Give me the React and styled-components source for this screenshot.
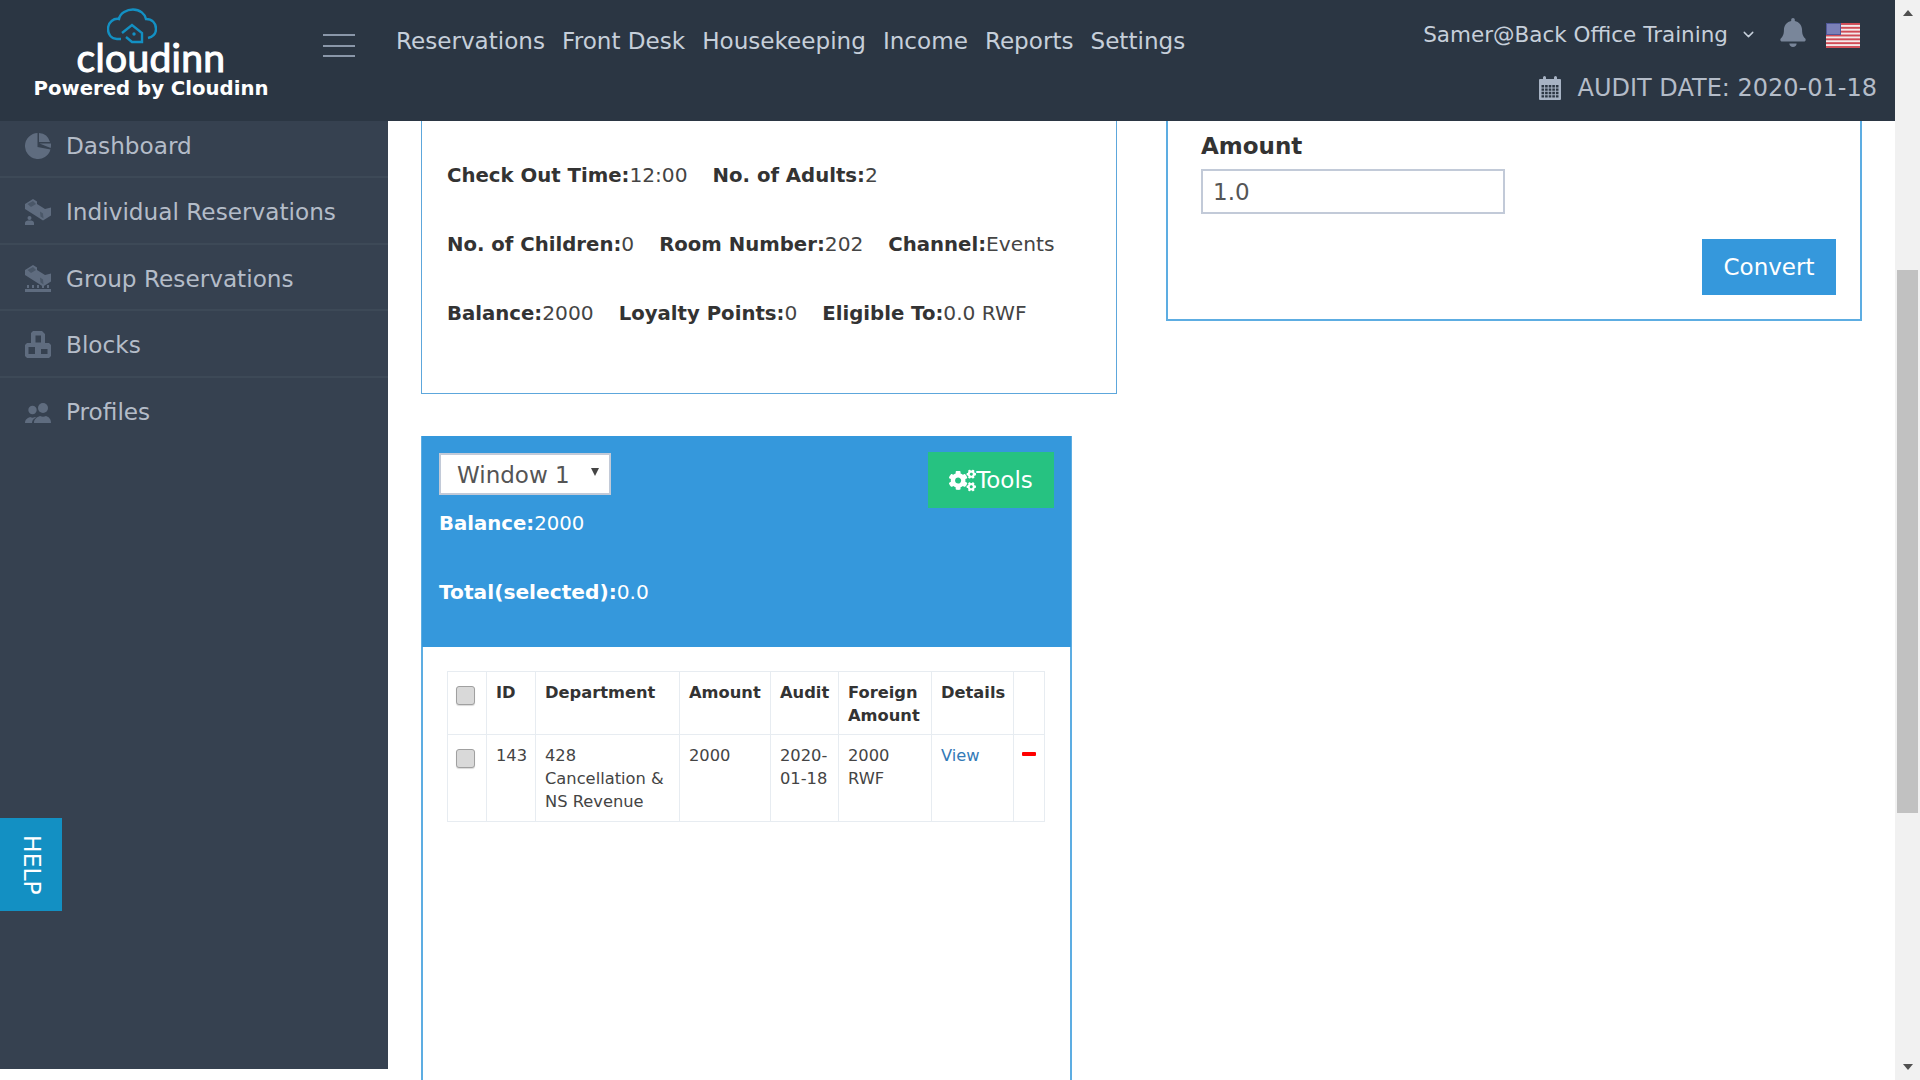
import styled, { createGlobalStyle } from "styled-components";
import { FaBell, FaCogs } from "react-icons/fa";
import { FiChevronDown } from "react-icons/fi";

const GlobalStyle = createGlobalStyle`
  html, body {
    margin: 0;
    height: 100%;
    overflow: hidden;
    background: #fff;
    font-family: "DejaVu Sans", Verdana, sans-serif;
    color: #333;
  }
  * { box-sizing: border-box; }
`;

const Page = styled.div`
  display: flex;
  width: 100%;
  height: 100vh;
`;

const Viewport = styled.div`
  flex: 1;
  min-width: 0;
  display: flex;
  flex-direction: column;
`;

/* scrollbar */
const ScrollTrack = styled.div`
  width: 25px;
  background: #f1f1f1;
  display: flex;
  flex-direction: column;
  align-items: center;
  padding-top: 10px;
`;

const ArrowUp = styled.span`
  width: 0;
  height: 0;
  border-left: 5px solid transparent;
  border-right: 5px solid transparent;
  border-bottom: 6px solid #505050;
`;

const ArrowDown = styled.span`
  width: 0;
  height: 0;
  margin-top: 251px;
  border-left: 5px solid transparent;
  border-right: 5px solid transparent;
  border-top: 6px solid #505050;
`;

const Thumb = styled.div`
  width: 21px;
  height: 543px;
  margin-top: 254px;
  background: #c1c1c1;
`;

/* header */
const Header = styled.header`
  height: 121px;
  flex: none;
  background: #2b3643;
  display: flex;
  position: relative;
`;

const Brand = styled.div`
  width: 302px;
  padding-top: 8px;
  display: flex;
  flex-direction: column;
  align-items: center;
`;

const CloudMark = styled.svg`
  width: 50px;
  height: 36px;
  flex: none;
  display: block;
  margin-right: 38px;
`;

const LogoWord = styled.span`
  font-family: "Lato", sans-serif;
  font-size: 39px;
  line-height: 30px;
  height: 30px;
  margin-top: -2px;
  color: #fff;
  letter-spacing: 0.3px;
  -webkit-text-stroke: 1.1px #fff;
`;

const PoweredBy = styled.div`
  font-size: 19.7px;
  line-height: 24px;
  font-weight: 700;
  color: #fff;
  margin-top: 5px;
`;

const Burger = styled.div`
  width: 32px;
  margin: 34px 0 0 21px;
  display: flex;
  flex-direction: column;
  gap: 8.5px;
  span {
    height: 2px;
    background: #8a97a9;
  }
`;

const Nav = styled.nav`
  display: flex;
  gap: 17px;
  margin: 25px 0 0 41px;
  height: 32px;
  align-items: center;
`;

const NavItem = styled.a`
  font-size: 23.1px;
  color: #c6cfda;
`;

const HeaderRight = styled.div`
  margin-left: auto;
  padding: 18px 18px 0 0;
  display: flex;
  flex-direction: column;
  align-items: flex-end;
  gap: 21px;
`;

const UserRow = styled.div`
  display: flex;
  align-items: center;
  height: 32px;
  padding-right: 17px;
  color: #c6cfda;
  font-size: 21.5px;
`;

const UserChevron = styled(FiChevronDown)`
  width: 17px;
  height: 17px;
  margin-left: 12px;
`;

const Bell = styled(FaBell)`
  width: 26px;
  height: 29px;
  color: #79869a;
  margin: -4px 20px 0 23px;
`;

const Flag = styled.svg`
  width: 34px;
  height: 25px;
  margin-top: 2px;
  display: block;
  filter: blur(0.4px);
`;

const AuditRow = styled.div`
  display: flex;
  align-items: center;
  gap: 17px;
  font-size: 24px;
  line-height: 34px;
  color: #b4bcc8;
`;

const CalendarIcon = styled.svg`
  width: 22px;
  height: 24px;
  fill: #a7b3c4;
`;

/* layout under the header */
const Body = styled.div`
  flex: 1;
  min-height: 0;
  display: flex;
`;

const Sidebar = styled.aside`
  width: 388px;
  height: 948px;
  flex: none;
  background: #364150;
  position: relative;
`;

const SideItem = styled.a`
  display: flex;
  align-items: center;
  height: 66.6px;
  padding: 3px 0 0 25px;
  gap: 15px;
  border-bottom: 2px solid #3d4957;
  font-size: 23.2px;
  color: #b4bcc8;
  &:first-child {
    height: 57px;
    padding: 0 0 7px 25px;
  }
  &:nth-child(5) {
    border-bottom-color: transparent;
  }
`;

const SideIcon = styled.svg`
  width: 26px;
  height: 27px;
  flex: none;
  fill: #5f6c7f;
`;

const HelpTab = styled.div`
  position: absolute;
  left: 0;
  top: 697px;
  width: 62px;
  height: 93px;
  padding-left: 2px;
  background: #1390c3;
  color: #fff;
  font-size: 23.5px;
  display: flex;
  align-items: center;
  justify-content: center;
  writing-mode: vertical-rl;
`;

const Main = styled.main`
  flex: 1;
  min-width: 0;
  overflow: hidden;
  display: grid;
  grid-template-columns: 696px 696px;
  gap: 49px;
  padding: 0 33px;
  align-items: start;
`;

const Column = styled.div`
  display: flex;
  flex-direction: column;
  min-height: 0;
`;

const InfoCard = styled.section`
  height: 273px;
  padding: 19px 0 0 25px;
  border: 1px solid #5da7dc;
  border-top: 0;
`;

const InfoRow = styled.div`
  height: 69px;
  display: flex;
  align-items: center;
  gap: 25px;
  font-size: 20.2px;
  color: #444;
`;

const Label = styled.b`
  font-size: 19.7px;
  font-weight: 700;
  color: #333;
`;

const ConvertCard = styled.section`
  height: 200px;
  padding: 9px 24px 0 33px;
  border: 2px solid #5dade2;
  border-top: 0;
  display: flex;
  flex-direction: column;
`;

const FieldLabel = styled.label`
  font-size: 23px;
  line-height: 32px;
  font-weight: 700;
  color: #333;
  margin-bottom: 7px;
`;

const AmountInput = styled.input`
  width: 304px;
  height: 45px;
  border: 2px solid #c2cad8;
  padding: 0 10px;
  font: 23px "DejaVu Sans", sans-serif;
  color: #555;
  outline: none;
`;

const Button = styled.button`
  border: 0;
  padding: 0;
  color: #fff;
  background: ${({ $green }) => ($green ? "#26c281" : "#3598dc")};
  font: 23px "DejaVu Sans", sans-serif;
`;

const ConvertButton = styled(Button)`
  width: 134px;
  height: 56px;
  margin: 25px 0 0 auto;
`;

const WindowCard = styled.section`
  width: 651px;
  height: 700px;
  margin-top: 42px;
  border: 2px solid #5dade2;
  border-top: 0;
`;

const WindowHead = styled.div`
  height: 211px;
  margin: 0 -1px;
  padding: 17px 17px 0 17px;
  background: #3598dc;
  color: #fff;
`;

const HeadTop = styled.div`
  display: flex;
  justify-content: space-between;
  align-items: flex-start;
`;

const SelectWrap = styled.div`
  position: relative;
  &::after {
    content: "";
    position: absolute;
    right: 12px;
    top: 15px;
    border-left: 4px solid transparent;
    border-right: 4px solid transparent;
    border-top: 8px solid #444;
  }
`;

const WindowSelect = styled.select`
  display: block;
  width: 172px;
  height: 42px;
  padding: 2px 0 0 16px;
  border: 2px solid #c2cad8;
  border-radius: 0;
  background: #fff;
  color: #555;
  font: 23px "DejaVu Sans", sans-serif;
  appearance: none;
`;

const ToolsButton = styled(Button)`
  width: 126px;
  height: 56px;
  margin-top: -1px;
  display: flex;
  align-items: center;
  justify-content: center;
  svg { width: 27px; height: 23px; }
`;

const TotalLine = styled.div`
  height: 69px;
  margin-top: -1px;
  display: flex;
  align-items: center;
  font-size: 20.2px;
  color: #fff;
  b { font-weight: 700; }
`;

const BalanceLine = styled(TotalLine)`
  margin-top: -19px;
  font-size: 19.7px;
`;

const TableWrap = styled.div`
  padding: 24px 24px 0;
`;

const Table = styled.table`
  width: 597px;
  table-layout: fixed;
  border-collapse: collapse;
  font-size: 16.3px;
  line-height: 23px;
  color: #444;
  th, td {
    border: 1px solid #e7ecf1;
    vertical-align: top;
    text-align: left;
    padding: 9px 9px 7px;
  }
  td { padding-bottom: 8px; }
  th { color: #333; font-weight: 700; }
`;

const RowCheck = styled.input`
  appearance: none;
  display: block;
  width: 19px;
  height: 19px;
  margin: 5px 0 0 -1px;
  border: 1px solid #a0a0a0;
  border-radius: 3px;
  background: #d9d9d9;
  box-shadow: 0 1px 1px rgba(0, 0, 0, 0.15);
`;

const ViewLink = styled.a`
  color: #337ab7;
`;

const RemoveMark = styled.span`
  display: block;
  width: 14px;
  height: 4px;
  margin: 8px 0 0 -1px;
  background: #f00;
  border-radius: 1px;
`;

const navItems = ["Reservations", "Front Desk", "Housekeeping", "Income", "Reports", "Settings"];
const colWidths = [39, 49, 144, 91, 68, 93, 82, 31];

const PieIcon = () => (
  <SideIcon viewBox="0 0 26 27">
    <path d="M12.500 1A13 13 0 1 0 25.500 17.500L12.500 15Z" />
    <path d="M14 1A12.500 12.500 0 0 1 25 10H14Z" />
    <path d="M14.500 11.500H26A13 13 0 0 1 25.700 16Z" />
  </SideIcon>
);

const BedBase = () => (
  <>
    <path d="M0 6 8 1l4 2.500V6l4 2.500 4 2.500 6-1.500v8l-8 5-7-4.500-11-7Z" />
    <path d="M2.500 6 8 3l3 3-5 3Z" fill="#4a5768" />
    <path d="M15 13.500l3 2 .5 5-3-2Z" fill="#4a5768" />
  </>
);

const BedIcon = () => (
  <SideIcon viewBox="0 0 26 27">
    <BedBase />
    <circle cx="4.500" cy="20" r="2" />
    <path d="M0 27v-2c0-2 2-2.500 4.500-2.500S9 23 9 25v2Z" />
  </SideIcon>
);

const GroupBedIcon = () => (
  <SideIcon viewBox="0 0 26 27">
    <g transform="translate(0 -1)"><BedBase /></g>
    <path d="M2 20h2v3H2Zm5 0h2v3H7Zm5 0h2v3h-2Zm5 0h2v3h-2Zm5 0h2v3h-2ZM0 24h26v3H0Z" />
  </SideIcon>
);

const BlocksIcon = () => (
  <SideIcon viewBox="0 0 26 27">
    <path fillRule="evenodd" d="M8 0h9l3 3v9h4l2 2v11l-2 2H2l-2-2V14l2-2h4V2ZM10.500 4.500v7h5.500v-7ZM3.500 16v7h6.500v-7Zm12.500 2v5h6.500v-5Z" />
  </SideIcon>
);

const UsersIcon = () => (
  <SideIcon viewBox="0 0 26 27">
    <circle cx="7.500" cy="12" r="4.200" />
    <circle cx="18" cy="10" r="5" />
    <path d="M0 25c0-4 3-5 5-6 2 1 3 1 5 0l1 .5C8 21 7 23 7 25Z" />
    <path d="M9 25c0-4 3-6 6-7 2 1 4 1 6 0 3 1 5 3 5 7Z" />
  </SideIcon>
);

const sideItems = [
  ["Dashboard", PieIcon],
  ["Individual Reservations", BedIcon],
  ["Group Reservations", GroupBedIcon],
  ["Blocks", BlocksIcon],
  ["Profiles", UsersIcon],
];

const stripes = [0, 2, 4, 6, 8, 10, 12];

const UsFlag = () => (
  <Flag viewBox="0 0 34 25">
    <rect width="34" height="25" fill="#f2e9ea" />
    {stripes.map((i) => (
      <rect key={i} y={i * 1.92} width="34" height="1.92" fill="#d04a55" />
    ))}
    <rect width="15" height="12" fill="#50589a" />
    <rect x="1" y="1" width="13" height="10" fill="#8d92c4" opacity="0.7" />
  </Flag>
);

const calendarCells = [0, 1, 2, 3, 4].flatMap((c) =>
  [0, 1, 2, 3].map((r) => `M${2.5 + c * 3.6} ${9 + r * 3.4}h2.600v2.400h-2.600Z`)
);

const Calendar = () => (
  <CalendarIcon viewBox="0 0 22 24">
    <path
      fillRule="evenodd"
      d={`M1 3h3V1.500a1.500 1.500 0 0 1 3 0V3h8V1.500a1.500 1.500 0 0 1 3 0V3h3a1 1 0 0 1 1 1v19a1 1 0 0 1-1 1H1a1 1 0 0 1-1-1V4a1 1 0 0 1 1-1Z${calendarCells.join("")}`}
    />
  </CalendarIcon>
);

const App = () => {
  return (
    <Page>
      <GlobalStyle />
      <Viewport>
        <Header>
          <Brand>
            <CloudMark viewBox="0 0 50 36" fill="none" stroke="#1390c3" strokeWidth="2.400">
              <path d="M14 31H10C4 31 1 26 1 21 1 14 7 10 12 11 13 5 20 1.500 26 1.500 33 1.500 38 6 39 11 45 11 49 15 49 21 49 26 45 29 41 30" />
              <path d="M15 25 25 17 35 25V34H25L19 29" />
              <circle cx="27" cy="26" r="1.700" fill="#1390c3" stroke="none" />
            </CloudMark>
            <LogoWord>cloudinn</LogoWord>
            <PoweredBy>Powered by Cloudinn</PoweredBy>
          </Brand>
          <Burger>
            <span />
            <span />
            <span />
          </Burger>
          <Nav>
            {navItems.map((item) => (
              <NavItem key={item}>{item}</NavItem>
            ))}
          </Nav>
          <HeaderRight>
            <UserRow>
              Samer@Back Office Training
              <UserChevron />
              <Bell />
              <UsFlag />
            </UserRow>
            <AuditRow>
              <Calendar />
              AUDIT DATE: 2020-01-18
            </AuditRow>
          </HeaderRight>
        </Header>
        <Body>
          <Sidebar>
            {sideItems.map(([label, Icon]) => (
              <SideItem key={label}>
                <Icon />
                {label}
              </SideItem>
            ))}
            <HelpTab>HELP</HelpTab>
          </Sidebar>
          <Main>
            <Column>
              <InfoCard>
                <InfoRow>
                  <span><Label>Check Out Time:</Label>12:00</span>
                  <span><Label>No. of Adults:</Label>2</span>
                </InfoRow>
                <InfoRow>
                  <span><Label>No. of Children:</Label>0</span>
                  <span><Label>Room Number:</Label>202</span>
                  <span><Label>Channel:</Label>Events</span>
                </InfoRow>
                <InfoRow>
                  <span><Label>Balance:</Label>2000</span>
                  <span><Label>Loyalty Points:</Label>0</span>
                  <span><Label>Eligible To:</Label>0.0 RWF</span>
                </InfoRow>
              </InfoCard>
              <WindowCard>
                <WindowHead>
                  <HeadTop>
                    <SelectWrap>
                      <WindowSelect defaultValue="1">
                        <option value="1">Window 1</option>
                      </WindowSelect>
                    </SelectWrap>
                    <ToolsButton $green>
                      <FaCogs />
                      Tools
                    </ToolsButton>
                  </HeadTop>
                  <BalanceLine><span><b>Balance:</b>2000</span></BalanceLine>
                  <TotalLine><span><b>Total(selected):</b>0.0</span></TotalLine>
                </WindowHead>
                <TableWrap>
                  <Table>
                    <colgroup>
                      {colWidths.map((w, i) => (
                        <col key={i} width={w} />
                      ))}
                    </colgroup>
                    <thead>
                      <tr>
                        <th><RowCheck type="checkbox" /></th>
                        <th>ID</th>
                        <th>Department</th>
                        <th>Amount</th>
                        <th>Audit</th>
                        <th>Foreign Amount</th>
                        <th>Details</th>
                        <th />
                      </tr>
                    </thead>
                    <tbody>
                      <tr>
                        <td><RowCheck type="checkbox" /></td>
                        <td>143</td>
                        <td>428 Cancellation &amp; NS Revenue</td>
                        <td>2000</td>
                        <td>2020-01-18</td>
                        <td>2000 RWF</td>
                        <td><ViewLink>View</ViewLink></td>
                        <td><RemoveMark /></td>
                      </tr>
                    </tbody>
                  </Table>
                </TableWrap>
              </WindowCard>
            </Column>
            <Column>
              <ConvertCard>
                <FieldLabel>Amount</FieldLabel>
                <AmountInput defaultValue="1.0" />
                <ConvertButton>Convert</ConvertButton>
              </ConvertCard>
            </Column>
          </Main>
        </Body>
      </Viewport>
      <ScrollTrack>
        <ArrowUp />
        <Thumb />
        <ArrowDown />
      </ScrollTrack>
    </Page>
  );
};

export default App;
